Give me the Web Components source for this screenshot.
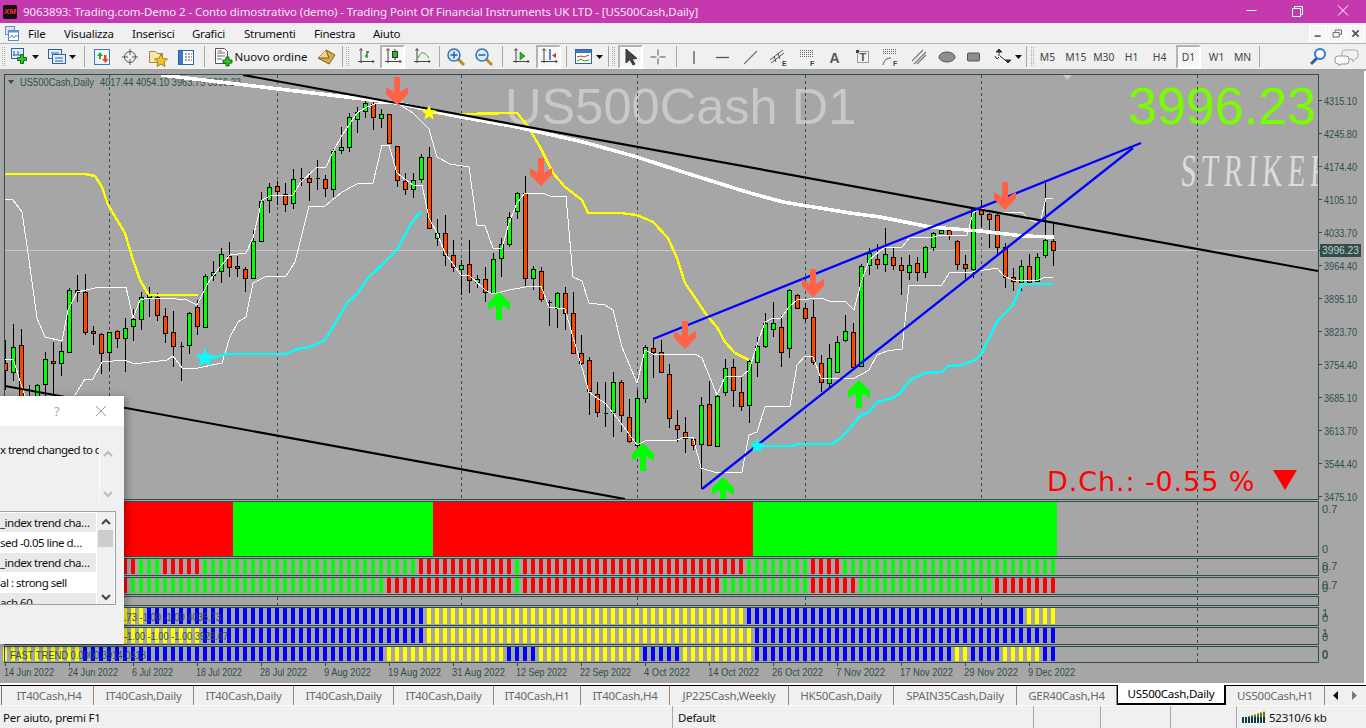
<!DOCTYPE html>
<html lang="it"><head><meta charset="utf-8"><title>MT4</title>
<style>html,body{margin:0;padding:0;height:100%;overflow:hidden;background:#f0f0f0}</style></head>
<body><x-window></x-window>
<script>
const UI='"Noto Sans","Open Sans","Liberation Sans",sans-serif';
const SL='#2F4F4F';
function shadow(h,html){const r=h.attachShadow({mode:'open'});r.innerHTML=html;return r;}

class XWindow extends HTMLElement{connectedCallback(){shadow(this,`<style>:host{display:flex;flex-direction:column;width:1366px;height:728px;overflow:hidden;font:11.5px ${UI};letter-spacing:-.25px;color:#000}</style>
<x-titlebar></x-titlebar><x-menubar></x-menubar><x-toolbar></x-toolbar><x-chart></x-chart><x-tabs></x-tabs><x-status></x-status>`);}}

class XTitlebar extends HTMLElement{connectedCallback(){shadow(this,`<style>:host{display:flex;align-items:center;height:23px;background:#C439AE;color:#f7e6f4;flex:none;position:relative}
.logo{width:14px;height:14px;background:#111;border-radius:2px;margin-left:3px;color:#f33;font:italic bold 8px "Liberation Sans",sans-serif;letter-spacing:0;display:flex;align-items:center;justify-content:center}
.t{margin-left:6px;white-space:nowrap;letter-spacing:-.1px}
.c{margin-left:auto;display:flex}.c svg{display:block;width:46px;height:23px}</style>
<div class="logo">XM</div><div class="t">9063893: Trading.com-Demo 2 - Conto dimostrativo (demo) - Trading Point Of Financial Instruments UK LTD - [US500Cash,Daily]</div>
<div class="c"><svg viewBox="0 0 46 23"><path d="M18.5 10.5h10" stroke="#fff" fill="none"/></svg>
<svg viewBox="0 0 46 23"><path d="M18.5 8.5h8v8h-8zM20.5 8.5v-2h8v8h-2" stroke="#fff" fill="none"/></svg>
<svg viewBox="0 0 46 23"><path d="M18 5.5l10 10M28 5.5l-10 10" stroke="#fff" fill="none"/></svg></div>`);}}

class XMenubar extends HTMLElement{connectedCallback(){
const items=[['File',36],['Visualizza',68],['Inserisci',60],['Grafici',52],['Strumenti',70],['Finestra',59],['Aiuto',40]];
shadow(this,`<style>:host{display:flex;align-items:center;height:20px;background:#f0f0f0;flex:none}
.ic{width:28px;display:flex;padding-left:5px;box-sizing:border-box}
span{white-space:nowrap;color:#111}
.m{margin-left:auto;display:flex;gap:1px;margin-right:1px}.m svg{width:18px;height:17px;background:#f7f7f7;border:1px solid #fff;box-sizing:border-box;display:block}</style>
<div class="ic"><svg width="14" height="15" viewBox="0 0 14 15"><rect x=".5" y=".5" width="9" height="8" fill="#cfe2f7" stroke="#6d93c4"/><rect x="3.5" y="4.5" width="10" height="10" fill="#fff" stroke="#5a86bd"/><rect x="3.5" y="4.5" width="10" height="2" fill="#6d93c4"/><path d="M5 12l2-3 2 3 2-3 2 2" stroke="#5a86bd" fill="none"/></svg></div>
${items.map(([t,w])=>`<span style="width:${w}px">${t}</span>`).join('')}
<div class="m"><svg viewBox="0 0 18 17"><path d="M5 11.5h7" stroke="#666" stroke-width="2" fill="none"/></svg>
<svg viewBox="0 0 18 17"><path d="M4.5 7.5h7v5h-7zM7 6.500v-2h7v5h-2" stroke="#555" fill="none"/></svg>
<svg viewBox="0 0 18 17"><path d="M5 5l7 7M12 5l-7 7" stroke="#555" stroke-width="2" fill="none"/></svg></div>`);}}

class XTool extends HTMLElement{connectedCallback(){shadow(this,`<style>:host{display:flex;align-items:center;justify-content:center;flex:none;height:24px;box-sizing:border-box;white-space:nowrap;color:#333}
:host([pressed]){border:2px solid #fff;border-top-color:#b4b4b4;border-left-color:#b4b4b4;background:repeating-conic-gradient(#fff 0 25%,#eeeeee 0 50%) 0 0/2px 2px}</style><slot></slot>`);}}

const ax='<path d="M5 2v14M2 14.500h16" stroke="#444" fill="none"/><path d="M3.500 3.500l1.500-2 1.500 2M16.500 13l1.500 1.500-1.500 1.500" stroke="#444" fill="none"/>';
const S=(b,w=20,h=20)=>`<svg width="${w}" height="${h}" viewBox="0 0 ${w} ${h}" style="display:block;overflow:visible">${b}</svg>`;
const plus=(x,y,s=1)=>`<path transform="translate(${x} ${y}) scale(${s})" d="M3.500 .5h3v3h3v3h-3v3h-3v-3h-3v-3h3z" fill="#2fc62f" stroke="#0b6d0b"/>`;
const drop='<svg width="7" height="4" viewBox="0 0 7 4" style="display:block"><path d="M0 0h7L3.500 4z" fill="#111"/></svg>';
const dots=(x,y,w,n)=>Array.from({length:n},(_,i)=>`<path d="M${x} ${y+i*2+.5}h${w}" stroke="#666" stroke-dasharray="1 1"/>`).join('');
const I={
 chart:S(`<rect x="1.500" y="1.500" width="12" height="10" fill="#e5eefa" stroke="#2c62a8"/><path d="M4 4v5M3 8h7M8 4v4" stroke="#2c62a8" fill="none"/>`+plus(7,7)),
 prof:S(`<rect x="1.500" y="2.500" width="13" height="9" fill="#e5eefa" stroke="#2c62a8"/><rect x="5.500" y="7.500" width="13" height="9" fill="#e5eefa" stroke="#2c62a8"/><path d="M4 6h8M8 11h8M8 14h8" stroke="#2c62a8"/>`),
 market:S(`<rect x="2.500" y="2.500" width="15" height="15" fill="#eef4fc" stroke="#3b79c0"/><path d="M8 5l-3 4h2v3h2V9h2z" fill="#1fae1f"/><path d="M12 8v4h-2l3.500 4 3-4h-2V8z" fill="#e24a1c"/>`),
 cross:S(`<circle cx="10" cy="10" r="5.500" fill="none" stroke="#555"/><path d="M10 2v6M10 12v6M2 10h6M12 10h6" stroke="#555"/>`),
 nav:S(`<path d="M1.500 4.500h6l2 2h5v9h-13z" fill="#f6e7a9" stroke="#9a8a48"/><path d="M13 7l2 4.500 4.500.5-3.500 3 1 4.500-4-2.500-4 2.500 1-4.500-3.500-3 4.500-.5z" fill="#f1c32e" stroke="#a37f13"/>`),
 term:S(`<rect x="2.500" y="3.500" width="15" height="14" fill="#fff" stroke="#2c62a8"/><rect x="3" y="4" width="4" height="13" fill="#3b79c0"/><path d="M9 7h7M9 10h7M9 13h7" stroke="#555" stroke-dasharray="2 1"/>`),
 order:S(`<path d="M2.500 1.500h9l3 3v12h-12z" fill="#fff" stroke="#555"/><path d="M4 6h8M4 9h8M4 12h5" stroke="#666"/><path d="M5 4h4" stroke="#666"/>`+plus(9.500,9.500)),
 gold:S(`<path d="M1 11l8-8 9 5-6 9z" fill="#d9ab4f" stroke="#7c5b16"/><path d="M9 3l3 8-11 0" fill="#f0d58e" stroke="#7c5b16"/>`),
 bar:S(ax+`<path d="M11 4v7M9 9h2M11 5h2" stroke="#1a8a1a" stroke-width="1.400" fill="none"/>`),
 candle:S(ax+`<path d="M12 2v11" stroke="#333"/><rect x="9.500" y="4.500" width="5" height="6" fill="#21c621" stroke="#333"/>`),
 line:S(ax+`<path d="M6 11c3-7 6-7 11 0" stroke="#3a9a3a" fill="none"/>`),
 zin:S(`<path d="M12 12l6 6" stroke="#b98e22" stroke-width="3"/><circle cx="8" cy="8" r="6" fill="#dbeafa" stroke="#3173bd" stroke-width="1.500"/><path d="M4.500 8h7M8 4.500v7" stroke="#2a5f9e" stroke-width="1.500"/>`),
 zout:S(`<path d="M12 12l6 6" stroke="#b98e22" stroke-width="3"/><circle cx="8" cy="8" r="6" fill="#dbeafa" stroke="#3173bd" stroke-width="1.500"/><path d="M4.500 8h7" stroke="#2a5f9e" stroke-width="1.500"/>`),
 auto:S(ax+`<path d="M9 5l5 4-5 4z" fill="#23b423" stroke="#0f700f" stroke-width=".6"/>`),
 shift:S(ax+`<path d="M11 2v11" stroke="#2663b5" stroke-width="1.500"/><path d="M13 8.500l4-2.500v5z" fill="#d83b12"/>`),
 tmpl:S(`<rect x="1.500" y="2.500" width="16" height="14" fill="#fff" stroke="#2c62a8"/><rect x="2" y="3" width="15" height="3" fill="#3b79c0"/><path d="M3 10l4-1 3 1 5-2" stroke="#c33a1b" fill="none"/><path d="M3 14l4-2 3 2 5-1" stroke="#2aa32a" fill="none"/>`),
 cur:S(`<path d="M5 2v14l4-3.500 3 5.500 2-1-3-5 5-.5z" fill="#444" stroke="#333"/>`),
 thin:S(`<path d="M10 2.500v6M10 11.500v6M2.500 10h6M11.500 10h6" stroke="#555"/>`),
 v:S(`<path d="M10 4v13" stroke="#555" stroke-width="1.300"/>`),
 h:S(`<path d="M3 10.500h13" stroke="#555" stroke-width="1.300"/>`),
 tr:S(`<path d="M4 17L17 4" stroke="#777" stroke-width="1.300"/>`),
 ch:S(`<path d="M2 13L15 3M3 16L16 6M6 9l2 6M10 6l2 6" stroke="#555" fill="none"/><text x="14" y="19" font-family="Liberation Sans" font-size="7" font-weight="bold" fill="#444">E</text>`),
 fib:S(dots(3,3,13,4)+`<text x="13" y="19" font-family="Liberation Sans" font-size="7" font-weight="bold" fill="#444">F</text>`),
 a:S(`<text x="4.500" y="16" font-family="Liberation Sans" font-size="14" font-weight="bold" fill="#555">A</text>`),
 t:S(`<rect x="4.500" y="4.500" width="11" height="11" fill="none" stroke="#444" stroke-dasharray="1 1"/><rect x="3" y="3" width="3" height="3" fill="#444"/><text x="6.500" y="14" font-family="Liberation Sans" font-size="11" font-weight="bold" fill="#555">T</text>`),
 fan:S(dots(3,2,14,3)+`<path d="M3 18c1-5 4-7 8-7" stroke="#555" fill="none"/><text x="13" y="19" font-family="Liberation Sans" font-size="7" font-weight="bold" fill="#444">F</text>`),
 para:S(`<path d="M3 14L14 3M5 17L17 5M8 17l9-9" stroke="#777" stroke-width="1.200" fill="none"/>`),
 ell:S(`<ellipse cx="10" cy="10" rx="8" ry="5" fill="#8e8e8e" stroke="#555"/>`),
 rect:S(`<rect x="3.500" y="6" width="12" height="8" rx="1" fill="#8e8e8e" stroke="#555"/>`),
 arr:S(`<path d="M6 2l3 3H3zM6 5v4M15 16l-3-3h6zM7 9l5 4" stroke="#333" fill="#333"/><path d="M2 9l2 3 2-2" stroke="#333" fill="none"/>`),
 srch:S(`<path d="M9 11l-6 6" stroke="#2c62a8" stroke-width="3"/><circle cx="12" cy="7" r="5" fill="#fff" stroke="#2f77d0" stroke-width="2"/>`),
 chat:S(`<path d="M11 3h10a3 3 0 0 1 3 3v3a3 3 0 0 1-3 3l-2 3-1-3h-7a3 3 0 0 1-3-3V6a3 3 0 0 1 3-3z" fill="#f2f2f2" stroke="#aaa"/><path d="M4 9h8a3 3 0 0 1 3 3v2a3 3 0 0 1-3 3H7l-2 2v-2H4a3 3 0 0 1-3-3v-2a3 3 0 0 1 3-3z" fill="#f8f8f8" stroke="#999"/>`,25,20)
};
const grip='<svg width="4" height="20" viewBox="0 0 4 20" style="display:block"><path d="M0 .5h4M0 2.500h4M0 4.500h4M0 6.500h4M0 8.500h4M0 10.500h4M0 12.500h4M0 14.500h4M0 16.500h4M0 18.500h4" stroke="#aaa" stroke-dasharray="1 1"/></svg>';
const sep='<div style="width:1px;height:21px;background:#a8a8a8"></div>';
const tf=t=>`<span style="display:inline-block;transform:scaleX(.9);color:#444;letter-spacing:0">${t}</span>`;
class XToolbar extends HTMLElement{connectedCallback(){
const L=[[2,4,grip],[10,20,I.chart],[31,8,drop],[47,20,I.prof],[68,8,drop],[84,1,sep],[92,20,I.market],[120,20,I.cross],[148,20,I.nav],[176,20,I.term],[204,1,sep],[213,20,I.order],[234,74,'<span style="letter-spacing:-.05px;color:#111">Nuovo ordine</span>'],[317,20,I.gold],[342,1,sep],[346,4,grip],[356,20,I.bar],[380,25,I.candle,1],[412,20,I.line],[439,1,sep],[446,20,I.zin],[474,20,I.zout],[502,1,sep],[511,20,I.auto],[536,25,I.shift,1],[566,1,sep],[574,20,I.tmpl],[595,8,drop],[608,1,sep],[612,4,grip],[618,25,I.cur,1],[648,20,I.thin],[676,1,sep],[684,20,I.v],[713,20,I.h],[740,20,I.tr],[768,20,I.ch],[797,20,I.fib],[825,20,I.a],[853,20,I.t],[880,20,I.fan],[909,20,I.para],[937,20,I.ell],[964,20,I.rect],[993,20,I.arr],[1014,8,drop],[1026,1,sep],[1031,4,grip],[1038,20,tf('M5')],[1062,28,tf('M15')],[1090,28,tf('M30')],[1122,20,tf('H1')],[1150,20,tf('H4')],[1176,25,tf('D1'),1],[1207,20,tf('W1')],[1233,20,tf('MN')],[1259,1,sep],[1308,20,I.srch],[1334,25,I.chat]];
let p=0,h='';
for(const [x,w,c,pr] of L){h+=`<x-tool ${pr?'pressed':''} style="width:${w}px;margin-left:${x-p}px">${c}</x-tool>`;p=x+w;}
shadow(this,`<style>:host{display:flex;align-items:center;height:28px;box-sizing:border-box;border-top:1px solid #b4b4b4;border-bottom:2px solid #a4a4a4;background:#f0f0f0;flex:none;color:#333}</style>${h}`);}}

const C9=[[240,310,330,390,'r'],[192,262,335,362,'g'],[207,256,420,450,'r'],[375,415,440,470,'r'],[373,375,430,470,'g'],[277,298,373,410,'g'],[247,302,310,410,'r'],[246,274,310,347,'g'],[85,91,275,280,'g'],[45,91,96,125,'r'],[42,97,215,225,'r'],[198,214,220,254,'r'],[218,223,280,342,'r'],[217,217,277,332,'g'],[210,214,235,265,'r'],[175,205,235,335,'g'],[147,178,199,242,'g'],[95,112,178,210,'g'],[82,104,110,170,'g'],[100,112,165,183,'r'],[145,167,220,248,'r'],[153,217,259,322,'r'],[247,259,259,362,'d'],[157,160,256,282,'g'],[120,142,199,224,'r'],[43,49,200,205,'g'],[3,35,45,62,'g']];
const C6=[[535,552,604,640,'g'],[517,558,592,622,'r'],[557,587,595,622,'r'],[590,598,625,665,'r'],[480,513,625,548,'g'],[365,392,512,515,'g'],[340,352,390,428,'g'],[332,347,364,405,'r'],[340,371,403,425,'r'],[298,326,400,418,'g'],[295,323,323,348,'d'],[305,325,337,392,'r'],[270,325,325,360,'d'],[315,328,355,380,'r'],[238,242,358,380,'g'],[172,230,241,253,'g'],[130,142,232,245,'g'],[110,125,148,188,'g'],[78,100,122,145,'g'],[95,103,142,180,'r'],[118,133,145,175,'g'],[133,133,218,222,'r'],[227,227,330,352,'r'],[310,332,358,375,'r'],[310,329,358,383,'g'],[252,262,328,338,'g'],[232,260,475,478,'r'],[447,488,505,528,'g'],[435,488,555,587,'r']];
const C7=[[510,555,592,605,'r'],[570,584,598,675,'g'],[510,583,630,670,'r'],[615,628,637,655,'g'],[590,628,667,697,'r'],[550,568,670,672,'g'],[505,522,565,620,'g'],[427,442,523,530,'g'],[365,370,424,448,'g'],[318,370,625,650,'r'],[588,598,625,660,'g'],[590,602,688,695,'r'],[690,695,695,767,'d'],[665,670,715,775,'g'],[652,668,730,780,'r'],[665,730,848,852,'r'],[795,850,878,893,'r'],[862,871,963,1035,'r'],[935,973,1027,1040,'r'],[935,1028,1028,1070,'d'],[905,937,1025,1100,'g'],[930,937,1036,1085,'r'],[987,1040,1113,1118,'r'],[960,985,1125,1130,'g'],[825,832,985,998,'g'],[805,835,845,925,'r'],[810,845,907,908,'r'],[882,913,1045,1075,'r'],[1020,1064,1078,1115,'r'],[1042,1085,1103,1148,'r'],[1100,1108,1126,1140,'r'],[980,1006,1123,1258,'g'],[932,1003,1125,1128,'r'],[970,978,1129,1130,'g'],[867,895,967,978,'g'],[868,892,960,1010,'r'],[920,965,1008,1022,'r'],[870,873,1006,1058,'g'],[800,827,875,922,'g'],[730,758,829,835,'g'],[695,760,778,800,'g'],[735,772,845,890,'r'],[658,661,835,865,'g'],[672,676,715,718,'r'],[700,715,745,757,'r'],[690,742,877,885,'r'],[855,878,935,965,'r'],[823,865,940,955,'g'],[798,815,907,910,'g'],[735,784,810,815,'g'],[758,785,890,895,'r'],[583,587,888,892,'g'],[535,548,586,615,'g'],[522,568,582,598,'r'],[475,553,583,605,'g'],[530,560,584,600,'r']];
const C8=[[380,404,421,495,'r'],[375,406,425,450,'g'],[380,400,427,452,'r'],[348,351,427,445,'g'],[305,310,352,362,'g'],[297,301,310,312,'g'],[297,300,315,330,'r'],[330,334,403,420,'r'],[375,403,415,447,'r'],[233,238,417,445,'g'],[210,233,252,290,'r'],[248,253,268,355,'r'],[250,255,352,375,'r'],[338,352,440,473,'r'],[414,440,453,482,'r'],[390,409,455,482,'g'],[372,409,455,458,'r'],[370,380,452,455,'g'],[158,331,376,383,'g'],[282,332,361,407,'r']];
const cs=[];
const add=(a,o)=>a.forEach(c=>cs.push([o+c[0]/3,o+c[1]/3,o+c[2]/3,o+c[3]/3,c[4]]));
add(C9,260);add(C6,70);add(C7,70);add(C8,130);
const R=v=>Math.round(v);
const pl=(pts,col,w)=>`<polyline points="${pts.flat().join(' ')}" fill="none" stroke="${col}" stroke-width="${w}" stroke-linejoin="round"/>`;
const star=(cx,cy,r,col)=>{let p=[];for(let i=0;i<10;i++){const a=-Math.PI/2+i*Math.PI/5,q=i%2?r*.45:r;p.push((cx+q*Math.cos(a)).toFixed(1)+','+(cy+q*Math.sin(a)).toFixed(1));}return `<polygon points="${p.join(' ')}" fill="${col}"/>`;};
const down=(x,y)=>`<path transform="translate(${x} ${y})" d="M-3 0h6v15l8-5v7L0 28-11 17v-7l8 5z" fill="#FF6347"/>`;
const up=(x,y)=>`<path transform="translate(${x} ${y})" d="M-3 28h6V13l8 5v-7L0 0-11 11v7l8-5z" fill="#00FF00"/>`;
const grid=[109,277,461,637,805,981,1197];
const gridLines=(a,b)=>grid.map(x=>`<path d="M${x+.5} ${a}V${b}" stroke="${SL}" stroke-dasharray="3 3"/>`).join('');

const W1=[[161,75],[397,103],[443,113],[450,115],[517,127],[583,142],[637,157],[683,172],[750,193],[783,202],[850,213],[880,217],[930,227],[980,231],[1023,236],[1054,237]];
const Y1=[[5,174],[85,174],[95,176],[102,187],[108,205],[125,233],[133,260],[140,280],[148,294]];
const Y1b=[[148,295],[198,295]];
const Y2=[[428,113],[460,114],[517,113],[527,125],[540,147],[553,173],[565,187],[582,200],[588,213],[620,213],[637,215],[653,222],[668,238],[677,258],[685,283],[708,317],[717,327],[725,342],[735,353],[749,360]];
const C1=[[205,358],[213,358],[227,354],[286,354],[297,349],[310,347],[325,340],[348,302],[358,293],[367,279],[387,260],[397,250],[412,222],[422,211]];
const C2=[[757,446],[793,446],[798,444],[832,444],[842,437],[862,414],[868,413],[877,402],[893,398],[900,393],[910,380],[925,373],[942,372],[948,366],[962,365],[975,360],[982,353],[998,320],[1013,305],[1022,284],[1053,284]];
const BU=[[5,199],[13,200],[22,212],[28,253],[37,318],[45,337],[62,341],[68,310],[77,292],[100,287],[126,287],[133,318],[140,300],[148,298],[167,298],[187,300],[197,305],[208,283],[220,267],[230,255],[246,253],[253,238],[262,200],[270,196],[293,195],[300,183],[317,167],[326,167],[333,152],[341,137],[357,113],[365,108],[377,103],[397,103],[413,113],[429,129],[437,157],[450,164],[469,167],[477,225],[485,226],[493,248],[502,248],[509,223],[517,203],[525,193],[542,193],[550,196],[566,196],[573,277],[582,281],[589,303],[605,305],[613,310],[622,347],[637,383],[645,350],[653,354],[695,354],[702,358],[717,395],[725,377],[742,376],[749,370],[757,345],[765,322],[773,318],[781,318],[789,307],[797,300],[821,298],[829,301],[845,301],[854,310],[861,283],[869,260],[885,247],[902,247],[910,237],[933,237],[941,235],[967,235],[973,213],[980,208],[995,212],[1022,212],[1030,220],[1040,223],[1046,198],[1053,198]];
const BL=[[5,359],[13,359],[22,387],[30,410],[60,420],[75,395],[85,379],[93,379],[102,362],[125,360],[134,364],[167,360],[173,356],[182,368],[198,368],[222,363],[230,337],[238,322],[246,317],[253,283],[267,276],[286,276],[295,262],[309,206],[325,206],[342,192],[357,184],[373,183],[382,145],[389,145],[397,173],[413,185],[422,185],[429,218],[437,233],[445,253],[461,275],[469,275],[485,290],[493,294],[509,290],[525,287],[541,286],[549,307],[565,309],[573,337],[589,392],[597,398],[605,403],[621,423],[637,445],[645,441],[677,440],[685,437],[693,437],[701,468],[717,473],[742,472],[749,435],[757,432],[765,407],[790,406],[797,365],[805,356],[813,357],[821,378],[853,379],[869,370],[877,355],[887,351],[902,349],[909,285],[942,285],[949,273],[972,272],[997,268],[1004,276],[1013,280],[1037,281],[1045,277],[1053,277]];

const lab=(x,y,t,len,col=SL)=>`<text x="${x}" y="${y}" font-family="Liberation Sans" font-size="11" letter-spacing="0" fill="${col}" textLength="${len}" lengthAdjust="spacingAndGlyphs">${t}</text>`;

class XMainPane extends HTMLElement{connectedCallback(){
let c='';
cs.forEach((d,k)=>{const x=5.5+8*k;const t=R(d[1]),b=R(d[2]);
 c+=`<path d="M${x} ${R(d[0])}V${R(d[3])}" stroke="#000"/>`;
 if(d[4]=='d')c+=`<path d="M${x-2} ${t+.5}h4" stroke="#000"/>`;
 else c+=`<rect x="${x-2}" y="${t+.5}" width="4" height="${Math.max(b-t,1)}" fill="${d[4]=='g'?'#00FF00':'#FF4500'}" stroke="#000"/>`;});
const prices=['4315.10','4245.80','4174.40','4105.10','4033.70','3964.40','3895.10','3823.70','3754.40','3685.10','3613.70','3544.40','3475.10'];
const axis=prices.map((p,i)=>{const y=100.5+33*i;return `<path d="M1319 ${y}h3" stroke="${SL}"/>`+lab(1324,y+4,p,33);}).join('');
shadow(this,`<style>:host{display:block;height:429px;flex:none;letter-spacing:0}svg{display:block;overflow:visible}</style>
<svg width="1366" height="429" viewBox="0 71 1366 429">
<defs><clipPath id="cl"><rect x="5" y="75" width="1313" height="424"/></clipPath></defs>
<g clip-path="url(#cl)">
<text x="505" y="124" font-family="Liberation Sans" font-size="50.500" letter-spacing=".05" fill="#C8C8C8">US500Cash D1</text>
<text x="1128" y="123.500" font-family="Liberation Sans" font-size="52" fill="#7CFC00">3996.23</text>
<text transform="translate(1180 186) scale(.62 1) skewX(-5)" font-family="Liberation Serif" font-size="46" letter-spacing="8" fill="#e4e4e4" fill-opacity=".9">STRIKER</text>
<text x="1047" y="491" font-family="DejaVu Sans" font-size="27" letter-spacing=".9" fill="#FF0000">D.Ch.: -0.55 %</text>
<path d="M1273 470h24l-12 20z" fill="#FF0000"/>
<path d="M8 80h6l-3 4z" fill="${SL}"/>
${lab(20,86,'US500Cash,Daily',74)}${lab(100,86,'4017.44 4054.10 3963.75 3996.23',141)}
<path d="M1063 75h9l-4.500 5z" fill="#C8C8C8"/>
${gridLines(75,499)}
<path d="M5 250.500H1318" stroke="#C8C8C8"/>
<g shape-rendering="crispEdges">${c}</g>
<g shape-rendering="crispEdges">
${pl(BU,'#fff',1)}${pl(BL,'#fff',1)}
${pl(Y1,'#FFFF00',2.400)}${pl(Y1b,'#FFFF00',2.400)}${pl(Y2,'#FFFF00',2.400)}
${pl(C1,'#00FFFF',2.400)}${pl(C2,'#00FFFF',2.400)}
${pl(W1,'#fff',3.600)}
</g>
${pl([[243,75],[1318,271]],'#000',2.200)}${pl([[5,386],[625,499]],'#000',2.200)}
${pl([[653,339],[1141,143]],'#0000FF',2.300)}${pl([[702,489],[1133,148]],'#0000FF',2.300)}
${[[397,77],[541,158],[685,321],[813,269],[1005,182]].map(a=>down(...a)).join('')}
${[[499,292],[643,443],[723,477],[859,380]].map(a=>up(...a)).join('')}
${star(429,113,8,'#FFFF00')}${star(205,358,10,'#00FFFF')}${star(757,446,8,'#00FFFF')}
</g>
<rect x="4.500" y="74.500" width="1314" height="425" fill="none" stroke="${SL}"/>
${axis}
<path d="M1319 250.500h2" stroke="${SL}"/>
<rect x="1320" y="244" width="41" height="13" fill="${SL}"/>
${lab(1322,254,'3996.23',37,'#C8C8C8')}
</svg>`);}}

const ranges=s=>{const o=[];s.split(' ').forEach(r=>{const[m,a,b]=r.match(/(\w)(\d+)-?(\d+)?/).slice(1);for(let k=+a;k<=+(b||a);k++)o[k]=m;});return o;};
const CL={r:'#FF0000',g:'#00FF00',y:'#FFFF00',b:'#0000FF'};
class XSubPane extends HTMLElement{connectedCallback(){
const H=+this.getAttribute('h');const row=this.getAttribute('bars');
let body='';
const grd=gridLines(1,H-1);
if(row){ranges(row).forEach((m,k)=>{body+=`<rect x="${3+8*k}" y="1" width="4" height="${H-3}" fill="${CL[m]}"/>`;});}
if(this.hasAttribute('seg')){this.getAttribute('seg').split(' ').forEach(s=>{const[a,b,m]=s.split(',');body+=`<rect x="${a}" y="1" width="${b-a}" height="${H-2}" fill="${CL[m]}"/>`;});}
let txt='';
if(this.hasAttribute('label')){const[x,l,t]=this.getAttribute('label').split('|');txt=lab(x,Math.round(H/2)+4,t,l);}
const tick=(this.getAttribute('ticks')||'').split(' ').filter(Boolean).map(s=>{const[t,y]=s.split(',');return `<text x="1322" y="${y}" font-family="Liberation Sans" font-size="11" letter-spacing="0" fill="${SL}">${t}</text>`;}).join('');
shadow(this,`<style>:host{display:block;flex:none;height:${H}px}svg{display:block}</style>
<svg width="1366" height="${H}" viewBox="0 0 1366 ${H}">${grd}${body}${txt}<rect x="4.500" y=".5" width="1314" height="${H-1}" fill="none" stroke="${SL}"/>${tick}</svg>`);}}

class XTimeAxis extends HTMLElement{connectedCallback(){
const d=[['14 Jun 2022',50],['24 Jun 2022',50],['6 Jul 2022',41],['18 Jul 2022',46],['28 Jul 2022',47],['9 Aug 2022',47],['19 Aug 2022',53],['31 Aug 2022',53],['12 Sep 2022',51],['22 Sep 2022',51],['4 Oct 2022',46],['14 Oct 2022',51],['26 Oct 2022',51],['7 Nov 2022',49],['17 Nov 2022',53],['29 Nov 2022',54],['9 Dec 2022',47]];
const s=d.map(([t,len],i)=>{const x=5+64*i;return `<path d="M${x+.5} 0v3" stroke="${SL}"/>`+lab(x-1,13,t,len);}).join('');
shadow(this,`<style>:host{display:block;flex:none;height:20px}svg{display:block}</style><svg width="1366" height="20" viewBox="0 0 1366 20">${s}</svg>`);}}

class XDialog extends HTMLElement{connectedCallback(){
const rows=[['_index trend cha…',1],['sed -0.05 line d…',0],['_index trend cha…',1],['al : strong sell',0],['ach 60',1]];
const chev=(d,c='#bbb')=>`<svg width="10" height="7" viewBox="0 0 10 7" style="display:block"><path d="${d}" fill="none" stroke="${c}" stroke-width="2"/></svg>`;
shadow(this,`<style>:host{position:absolute;left:0;top:325px;width:124px;height:248px;background:#f0f0f0;box-shadow:2px 2px 8px rgba(0,0,0,.35);display:flex;flex-direction:column;color:#111;overflow:hidden}
.t{height:30px;background:#fff;flex:none;display:flex;align-items:center;color:#aaa}
.q{margin-left:54px;width:8px;font-size:13px}.x{margin-left:34px;display:block}
.a{display:flex;height:60px;margin-top:16px;flex:none}.a div{width:99px;white-space:nowrap;overflow:hidden;line-height:15px;margin-top:0;letter-spacing:-.55px}
.sb{width:16px;border-left:1px solid #fff;display:flex;flex-direction:column;justify-content:space-between;align-items:center;padding:8px 0 4px;box-sizing:border-box}
.l{margin-top:9px;width:115px;height:92px;margin-left:0;border:1px solid #a0a0a0;border-left:0;box-sizing:content-box;display:flex;background:#fff;flex:none;overflow:hidden}
.rows{width:97px;flex:none;overflow:hidden;padding-top:1px}.r{height:19px;line-height:19px;border-bottom:1px solid #fff;white-space:nowrap;margin-right:1px;letter-spacing:-.5px}.r.g{background:#e9e9e9}
.s2{width:17px;background:#f0f0f0;display:flex;flex-direction:column;align-items:center;justify-content:space-between;padding:6px 0 3px;box-sizing:border-box;position:relative}
.th{position:absolute;left:1px;top:18px;width:15px;height:17px;background:#cdcdcd}</style>
<div class="t"><span class="q">?</span><svg class="x" width="10" height="10" viewBox="0 0 10 10"><path d="M0 0l10 10M10 0L0 10" stroke="#999"/></svg></div>
<div class="a"><div>x trend changed to d</div><span class="sb">${chev('M1 6l4-4 4 4')}${chev('M1 1l4 4 4-4')}</span></div>
<div class="l"><div class="rows">${rows.map(([t,g])=>`<div class="r ${g?'g':''}">${t}</div>`).join('')}</div><div class="s2">${chev('M1 6l4-4 4 4','#444')}<div class="th"></div>${chev('M1 1l4 4 4-4','#444')}</div></div>`);}}

class XChart extends HTMLElement{connectedCallback(){
shadow(this,`<style>:host{display:flex;flex-direction:column;gap:1px;height:614px;flex:none;background:#A6A6A6;position:relative;border-right:2px solid #fff;border-bottom:2px solid #fff;box-sizing:border-box;overflow:hidden}
x-time-axis{margin-top:-1px}</style>
<x-main-pane></x-main-pane>
<x-sub-pane h="56" seg="5,233,r 233,433,g 433,753,r 753,1057,g" ticks="0.7,12 0,52"></x-sub-pane>
<x-sub-pane h="18" bars="r0-16 g17-19 r20-24 g25-51 r52-63 g64 r65-92 g93-100 r101-104 g105-131" ticks="0.7,12 0,15"></x-sub-pane>
<x-sub-pane h="18" bars="r0-15 g16-47 r48-63 g64 r65-89 g90-100 r101-106 g107-123 r124-131" ticks="0.7,12 0,15"></x-sub-pane>
<x-sub-pane h="10"></x-sub-pane>
<x-sub-pane h="19" bars="y0-17 b18-52 y53-92 b93-127 y128-131" label="124|97|.73 -1.00 -1.00 4035.73" ticks="1,10 0,15"></x-sub-pane>
<x-sub-pane h="18" bars="y0-24 b25-52 y53-93 b94-131" label="124|104|-1.00 -1.00 -1.00 3928.67" ticks="1,10 0,14"></x-sub-pane>
<x-sub-pane h="17" bars="y0-9 b10-47 y48-62 b63-66 y67-79 b80-84 y85-93 b94-118 y119-120 b121-124 y125-129 b130-131" label="10|136|FAST TREND 0.0000 3914.0413" ticks="0,12 0,13"></x-sub-pane>
<x-time-axis></x-time-axis>
<x-dialog></x-dialog>`);}}

class XTab extends HTMLElement{connectedCallback(){shadow(this,`<style>:host{display:flex;align-items:center;justify-content:center;flex:none;height:19px;color:#6a6a6a;white-space:nowrap;box-sizing:border-box;border-right:1px solid #8a8a8a;background-clip:padding-box}
:host([active]){background:#fff;color:#000;border:1px solid #000;border-top:0;border-bottom:2px solid #000;height:21px;margin-top:-2px;border-right-width:2px}</style><slot></slot>`);}}
class XTabs extends HTMLElement{connectedCallback(){
const t=[['IT40Cash,H4',89],['IT40Cash,Daily',100],['IT40Cash,Daily',100],['IT40Cash,Daily',100],['IT40Cash,Daily',100],['IT40Cash,H1',87],['IT40Cash,H4',89],['JP225Cash,Weekly',119],['HK50Cash,Daily',105],['SPAIN35Cash,Daily',123],['GER40Cash,H4',100],['US500Cash,Daily',109,1],['US500Cash,H1',99]];
shadow(this,`<style>:host{display:flex;height:20px;border-top:1px solid #000;box-sizing:border-box;background:#f0f0f0;flex:none;padding-left:1px;align-items:flex-start}
.s{width:1px;height:19px;background:#777;margin-right:3px;flex:none}
svg{margin-left:8px;margin-top:5px;display:block;flex:none}</style>
<div class="s"></div>${t.map(([n,w,a])=>`<x-tab ${a?'active':''} style="width:${w}px">${n}</x-tab>`).join('')}
<svg width="5" height="9" viewBox="0 0 5 9"><path d="M5 0v9L0 4.500z" fill="#111"/></svg>
<svg style="margin-left:14px" width="5" height="9" viewBox="0 0 5 9"><path d="M0 0v9l5-4.500z" fill="#777"/></svg>`);}}

class XStatus extends HTMLElement{connectedCallback(){
const cell=(w,c)=>`<div style="width:${w}px" class="c">${c}</div>`;
const bars=Array.from({length:8},(_,i)=>{const x=.5+i*3;const h=5+i*.9;const top=13-h;return `<path d="M${x+.5} ${top}V7" stroke="#6b7a00" stroke-width="2"/><path d="M${x+.5} 7V13" stroke="#0d3c52" stroke-width="2"/>`;}).join('');
shadow(this,`<style>:host{display:flex;height:23px;background:#f0f0f0;align-items:center;flex:none;border-top:1px solid #fafafa;box-sizing:border-box;color:#111}
.c{height:100%;display:flex;align-items:center;box-sizing:border-box;border-left:1px solid #a8a8a8;padding-left:5px;white-space:nowrap;flex:none}
.c:first-of-type{border-left:0;padding-left:3px}</style>
${cell(672,'Per aiuto, premi F1')}${cell(361,'Default')}${cell(67,'')}${cell(70,'')}${cell(66,'')}
${cell(130,`<svg width="24" height="14" viewBox="0 0 24 14" style="display:block;margin-right:3px">${bars}</svg>52310/6 kb`)}`);}}

customElements.define('x-window',XWindow);customElements.define('x-titlebar',XTitlebar);customElements.define('x-menubar',XMenubar);customElements.define('x-tool',XTool);customElements.define('x-toolbar',XToolbar);customElements.define('x-main-pane',XMainPane);customElements.define('x-sub-pane',XSubPane);customElements.define('x-time-axis',XTimeAxis);customElements.define('x-dialog',XDialog);customElements.define('x-chart',XChart);customElements.define('x-tab',XTab);customElements.define('x-tabs',XTabs);customElements.define('x-status',XStatus);
</script></body></html>
